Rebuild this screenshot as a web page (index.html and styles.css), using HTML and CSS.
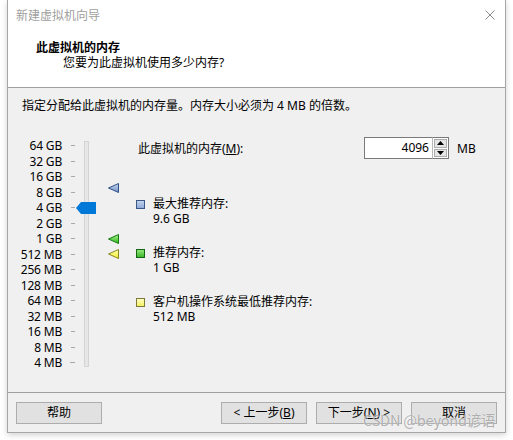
FILE: index.html
```html
<!DOCTYPE html>
<html lang="zh-CN">
<head>
<meta charset="utf-8">
<title>新建虚拟机向导</title>
<link rel="stylesheet" href="styles.css">
</head>
<body>
<div class="window">
  <div class="titlebar">
    <span class="title">新建虚拟机向导</span>
    <svg class="close" width="10" height="10" viewBox="0 0 10 10"><path d="M0.5 0.5 L9.5 9.5 M9.5 0.5 L0.5 9.5" stroke="#8a8a8a" stroke-width="1" fill="none"/></svg>
  </div>
  <div class="header">
    <div class="h-title">此虚拟机的内存</div>
    <div class="h-sub">您要为此虚拟机使用多少内存?</div>
  </div>
  <div class="body">
    <div class="intro">指定分配给此虚拟机的内存量。内存大小必须为 4 MB 的倍数。</div>
    <div class="main">
      <div class="slider">
        <div class="scale">
          <div class="row"><span class="lbl">64 GB</span><span class="tick"></span></div>
          <div class="row"><span class="lbl">32 GB</span><span class="tick"></span></div>
          <div class="row"><span class="lbl">16 GB</span><span class="tick"></span></div>
          <div class="row"><span class="lbl">8 GB</span><span class="tick"></span></div>
          <div class="row"><span class="lbl">4 GB</span><span class="tick"></span></div>
          <div class="row"><span class="lbl">2 GB</span><span class="tick"></span></div>
          <div class="row"><span class="lbl">1 GB</span><span class="tick"></span></div>
          <div class="row"><span class="lbl">512 MB</span><span class="tick"></span></div>
          <div class="row"><span class="lbl">256 MB</span><span class="tick"></span></div>
          <div class="row"><span class="lbl">128 MB</span><span class="tick"></span></div>
          <div class="row"><span class="lbl">64 MB</span><span class="tick"></span></div>
          <div class="row"><span class="lbl">32 MB</span><span class="tick"></span></div>
          <div class="row"><span class="lbl">16 MB</span><span class="tick"></span></div>
          <div class="row"><span class="lbl">8 MB</span><span class="tick"></span></div>
          <div class="row"><span class="lbl">4 MB</span><span class="tick tick-last"></span></div>
        </div>
        <div class="track"></div>
        <svg class="thumb" width="20" height="12" viewBox="0 0 20 12"><polygon points="0,6 5,0 20,0 20,12 5,12" fill="#0078d7"/></svg>
        <svg class="mark mark-max" width="11" height="10" viewBox="0 0 11 10">
          <defs><linearGradient id="gb" x1="0" y1="0" x2="0" y2="1"><stop offset="0" stop-color="#c8d8f0"/><stop offset="1" stop-color="#6f90c8"/></linearGradient></defs>
          <polygon points="0.5,5 10.5,0.5 10.5,9.5" fill="url(#gb)" stroke="#2f4f86" stroke-width="1"/>
        </svg>
        <svg class="mark mark-rec" width="11" height="10" viewBox="0 0 11 10">
          <defs><linearGradient id="gg" x1="0" y1="0" x2="0" y2="1"><stop offset="0" stop-color="#a6f08a"/><stop offset="1" stop-color="#33b81c"/></linearGradient></defs>
          <polygon points="0.5,5 10.5,0.5 10.5,9.5" fill="url(#gg)" stroke="#137a10" stroke-width="1"/>
        </svg>
        <svg class="mark mark-min" width="11" height="10" viewBox="0 0 11 10">
          <defs><linearGradient id="gy" x1="0" y1="0" x2="0" y2="1"><stop offset="0" stop-color="#ffffb0"/><stop offset="1" stop-color="#f2ee2a"/></linearGradient></defs>
          <polygon points="0.5,5 10.5,0.5 10.5,9.5" fill="url(#gy)" stroke="#8a8420" stroke-width="1"/>
        </svg>
      </div>
      <div class="pane">
        <div class="mem-row">
          <span class="mem-label">此虚拟机的内存(<u>M</u>):</span>
          <div class="spin">
            <div class="spin-input">4096</div>
            <div class="spin-btns">
              <div class="spin-btn"><svg width="7" height="4" viewBox="0 0 7 4"><polygon points="0,4 3.5,0 7,4" fill="#000"/></svg></div>
              <div class="spin-btn"><svg width="7" height="4" viewBox="0 0 7 4"><polygon points="0,0 7,0 3.5,4" fill="#000"/></svg></div>
            </div>
          </div>
          <span class="unit">MB</span>
        </div>
        <div class="legend">
          <div class="item">
            <span class="sq sq-max"></span>
            <div class="item-text"><div>最大推荐内存:</div><div>9.6 GB</div></div>
          </div>
          <div class="item">
            <span class="sq sq-rec"></span>
            <div class="item-text"><div>推荐内存:</div><div>1 GB</div></div>
          </div>
          <div class="item">
            <span class="sq sq-min"></span>
            <div class="item-text"><div>客户机操作系统最低推荐内存:</div><div>512 MB</div></div>
          </div>
        </div>
      </div>
    </div>
  </div>
  <div class="footer">
    <button class="btn">帮助</button>
    <span class="spacer"></span>
    <button class="btn">&lt; 上一步(<u>B</u>)</button>
    <button class="btn">下一步(<u>N</u>) &gt;</button>
    <button class="btn">取消</button>
  </div>
</div>
<div class="watermark">CSDN @beyond谚语</div>
</body>
</html>
```
FILE: styles.css
```css
* { box-sizing: border-box; }
html, body { margin: 0; padding: 0; }
body {
  background: #ffffff;
  width: 513px;
  height: 440px;
  overflow: hidden;
  position: relative;
  font-family: "Noto Sans", "Noto Sans CJK SC", sans-serif;
  font-size: 12px;
  color: #000;
}
.window {
  margin-left: 7px;
  width: 499px;
  height: 433px;
  border-left: 1px solid #a6a6a6;
  border-right: 1px solid #a6a6a6;
  border-bottom: 1px solid #a6a6a6;
  background: #f0f0f0;
  box-shadow: 0 2px 6px rgba(0,0,0,0.18);
  display: flex;
  flex-direction: column;
}
.titlebar {
  height: 30px;
  background: #fff;
  display: flex;
  align-items: center;
  padding: 0 10px 0 8px;
}
.title {
  flex: 1;
  color: #a0a0a0;
  line-height: 15px;
  padding-top: 1px;
}
.close { display: block; margin-top: 0; }
.header {
  height: 58px;
  background: #fff;
  border-bottom: 1px solid #a0a0a0;
  padding: 10px 0 0 28px;
  line-height: 15px;
}
.h-title { font-weight: bold; }
.h-sub { padding-left: 27px; }
.body {
  height: 304px;
  padding: 10px 0 0 14px;
  line-height: 15px;
}
.intro { height: 15px; }
.main {
  margin-top: 25px;
  margin-left: -14px;
  display: flex;
}
.slider {
  position: relative;
  width: 130px;
  display: flex;
  align-items: flex-start;
}
.scale {
  width: 67px;
  display: flex;
  flex-direction: column;
}
.row {
  height: 15.5px;
  display: flex;
  align-items: center;
  justify-content: flex-end;
}
.lbl {
  width: 54px;
  text-align: right;
  line-height: 15px;
  white-space: nowrap;
  letter-spacing: -0.2px;
}
.tick {
  width: 4px;
  height: 1px;
  background: #a8a8a8;
  margin-left: 9px;
}
.tick-last { width: 5px; margin-left: 8px; }
.track {
  margin-left: 9px;
  margin-top: 3px;
  width: 5px;
  height: 226px;
  background: #e6e6e6;
  border: 1px solid #d4d4d4;
}
.thumb { position: absolute; left: 68px; top: 64px; display: block; }
.mark { position: absolute; left: 100px; display: block; }
.mark-max { top: 45px; }
.mark-rec { top: 96px; }
.mark-min { top: 111px; }
.pane {
  flex: 1;
  display: flex;
  flex-direction: column;
}
.mem-row {
  display: flex;
  align-items: center;
  height: 22px;
  margin-top: -1px;
}
.mem-label { width: 226px; padding-top: 1px; }
.spin { display: flex; height: 22px; }
.spin-input {
  width: 68px;
  height: 22px;
  background: #fff;
  border: 1px solid #7a7a7a;
  border-right: none;
  text-align: right;
  padding-right: 3px;
  line-height: 20px;
}
.spin-btns {
  width: 17px;
  height: 22px;
  border: 1px solid #7a7a7a;
  border-left: 1px solid #b8b8b8;
  background: #fff;
  display: flex;
  flex-direction: column;
  padding: 1px;
  gap: 1px;
}
.spin-btn {
  flex: 1;
  background: #e5e5e5;
  border: 1px solid #adadad;
  display: flex;
  align-items: center;
  justify-content: center;
}
.spin-btn svg { display: block; }
.unit { margin-left: 8px; }
.legend {
  margin-top: 37px;
  display: flex;
  flex-direction: column;
  gap: 19px;
}
.item { display: flex; align-items: flex-start; }
.sq {
  width: 9px;
  height: 9px;
  margin-left: -2px;
  margin-top: 4px;
  margin-right: 8px;
  flex: none;
}
.sq-max { background: linear-gradient(#c3d4ee, #8eaad8); border: 1px solid #3b5787; }
.sq-rec { background: linear-gradient(#8fe878, #3cb82a); border: 1px solid #146414; }
.sq-min { background: linear-gradient(#ffffc0, #f5f060); border: 1px solid #7c7a3a; }
.item-text { line-height: 15px; }
.footer {
  height: 40px;
  border-top: 1px solid #a0a0a0;
  padding: 9px 8px 0 8px;
  display: flex;
  align-items: flex-start;
  gap: 9px;
}
.spacer { flex: 1; }
.btn {
  width: 86px;
  height: 22px;
  background: #e1e1e1;
  border: 1px solid #adadad;
  font-family: inherit;
  font-size: 12px;
  color: #000;
  padding: 0;
  line-height: 18px;
}
.watermark {
  position: absolute;
  left: 363px;
  top: 411px;
  font-size: 14.5px;
  line-height: 18px;
  font-family: "Noto Sans CJK SC", sans-serif;
  color: rgba(110, 110, 110, 0.55);
  text-shadow: 0 0 1px #fff;
  white-space: nowrap;
  letter-spacing: -0.2px;
}
```
